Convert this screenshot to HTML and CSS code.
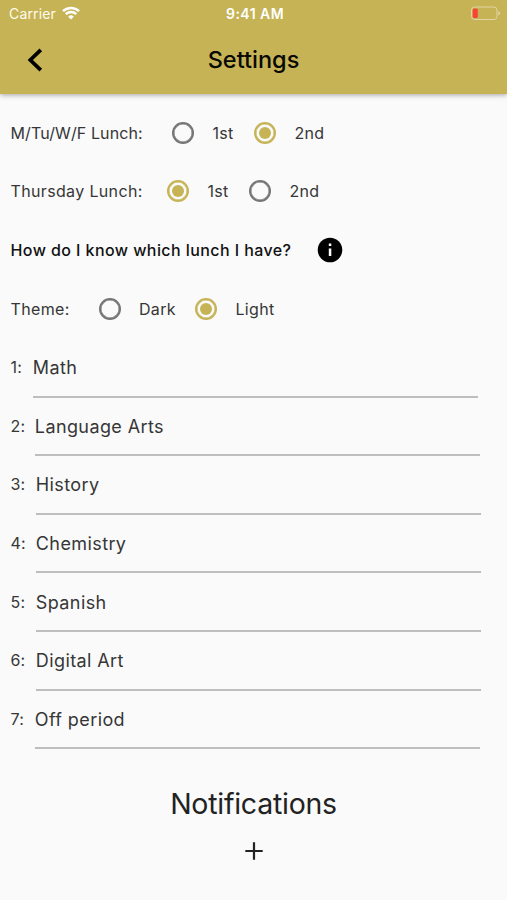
FILE: index.html
```html
<!DOCTYPE html>
<html lang="en">
<head>
<meta charset="utf-8">
<title>Settings</title>
<link rel="stylesheet" href="styles.css">
</head>
<body>
<header class="app-bar">
  <div class="status">
    <div class="carrier"><span>Carrier</span>
      <svg class="wifi" width="18" height="14" viewBox="0 0 18 14"><path d="M9 13.600 6.200 10.700a4 4 0 0 1 5.600 0z" fill="#fff"/><path d="M1 5.200a11.300 11.300 0 0 1 16 0M3.800 8.100a7.400 7.400 0 0 1 10.400 0" fill="none" stroke="#fff" stroke-width="2.500"/></svg>
    </div>
    <time class="clock">9:41 AM</time>
    <svg class="battery" width="31" height="15" viewBox="0 0 31 15"><rect x="1.500" y="1" width="25.500" height="12.500" rx="3" fill="none" stroke="#e1d5a4"/><rect x="2.800" y="2.500" width="5" height="9.500" rx="1.500" fill="#fa4238"/><path d="M28.300 5v4.500q1.800-.8 1.800-2.250T28.300 5z" fill="#e1d5a4"/></svg>
  </div>
  <div class="title-bar">
    <svg class="back" width="18" height="26" viewBox="0 0 18 26"><path d="M15.800 2.800 5.300 13l10.500 10.200" fill="none" stroke="#000" stroke-width="3.700"/></svg>
    <h1>Settings</h1>
  </div>
</header>
<main>
  <div class="row"><span class="label lunch-a">M/Tu/W/F Lunch:</span><i class="radio"></i><span class="option short">1st</span><i class="radio on"></i><span class="option">2nd</span></div>
  <div class="row"><span class="label lunch-b">Thursday Lunch:</span><i class="radio on"></i><span class="option short">1st</span><i class="radio"></i><span class="option">2nd</span></div>
  <div class="row"><span class="question">How do I know which lunch I have?</span>
    <svg class="info" width="26" height="26" viewBox="0 0 26 26"><circle cx="13" cy="13" r="12.300"/><path d="M11.800 6.500h2.500V9h-2.500zM11.800 11.600h2.500V19h-2.500z" fill="#fff"/></svg>
  </div>
  <div class="row"><span class="label theme">Theme:</span><i class="radio"></i><span class="option dark">Dark</span><i class="radio on"></i><span class="option">Light</span></div>
  <div class="row"><span class="num n1">1:</span><span class="field">Math</span></div>
  <div class="row"><span class="num n2">2:</span><span class="field">Language Arts</span></div>
  <div class="row"><span class="num">3:</span><span class="field">History</span></div>
  <div class="row"><span class="num">4:</span><span class="field">Chemistry</span></div>
  <div class="row"><span class="num">5:</span><span class="field">Spanish</span></div>
  <div class="row"><span class="num">6:</span><span class="field">Digital Art</span></div>
  <div class="row"><span class="num n2">7:</span><span class="field">Off period</span></div>
  <h2>Notifications</h2>
  <svg class="plus" width="20" height="20" viewBox="0 0 20 20"><path d="M10 1.300v17.400M1.300 10h17.400" stroke="#222" stroke-width="2.200"/></svg>
</main>
</body>
</html>
```
FILE: styles.css
```css
* { box-sizing: border-box; }
body {
  margin: 0;
  height: 900px;
  background: #fafafa;
  color: #363636;
  font-family: Inter, sans-serif;
  font-size: 16px;
}
.app-bar {
  height: 94px;
  background: #c6b356;
  box-shadow: 0 1px 5px rgba(0, 0, 0, .35);
}
.status {
  display: grid;
  grid-template-columns: 1fr auto 1fr;
  align-items: center;
  height: 27px;
  padding: 0 6px 0 9px;
  color: #fff;
  font-size: 14px;
}
.carrier { display: flex; align-items: center; gap: 6px; color: #fffbea; letter-spacing: .15px; }
.wifi { margin-top: -2px; }
.clock { font-size: 14px; font-weight: 600; letter-spacing: .45px; }
.battery { justify-self: end; }
.title-bar {
  display: grid;
  grid-template-columns: 1fr auto 1fr;
  align-items: center;
  height: 66px;
}
.back { margin-left: 25px; }
h1 { margin: 0; color: #080804; font-size: 23.5px; font-weight: 500; line-height: 30px; }
main { display: flex; flex-direction: column; padding: 9.4px 0 0 11px; }
.row { display: flex; align-items: center; height: 58.63px; white-space: nowrap; }
.label { text-indent: -.5px; }
.lunch-a { width: 161px; letter-spacing: .1px; }
.lunch-b { width: 156px; letter-spacing: .35px; }
.theme { width: 88px; letter-spacing: .35px; }
.radio {
  display: grid;
  place-items: center;
  width: 22px;
  height: 22px;
  flex: none;
  border: 2px solid #757575;
  border-radius: 50%;
  box-shadow: inset 0 0 0 .5px #757575;
}
.radio.on { border-color: #c6b356; box-shadow: inset 0 0 0 .5px #c6b356; }
.radio.on::after { content: ""; width: 12px; height: 12px; border-radius: 50%; background: #c6b356; }
.option { margin-left: 18.5px; letter-spacing: .3px; }
.option.short { width: 41.5px; }
.option.dark { width: 56px; margin-left: 18px; }
.question { width: 306px; color: #111; font-weight: 500; letter-spacing: .42px; text-indent: -.5px; }
.num { width: 25px; letter-spacing: .2px; text-indent: -.5px; }
.n1 { width: 22px; }
.n2 { width: 24px; }
.field {
  display: flex;
  align-items: center;
  width: 445px;
  height: 60.6px;
  padding-top: 3px;
  border-bottom: 2px solid #bebebe;
  font-size: 18px;
  letter-spacing: .4px;
  text-indent: -.2px;
}
h2 { margin: 37.4px 11px 0 0; color: #222; text-align: center; font-size: 28.5px; font-weight: 400; line-height: 36px; letter-spacing: -.25px; }
.plus { margin: 19px 0 0 233px; }
```
